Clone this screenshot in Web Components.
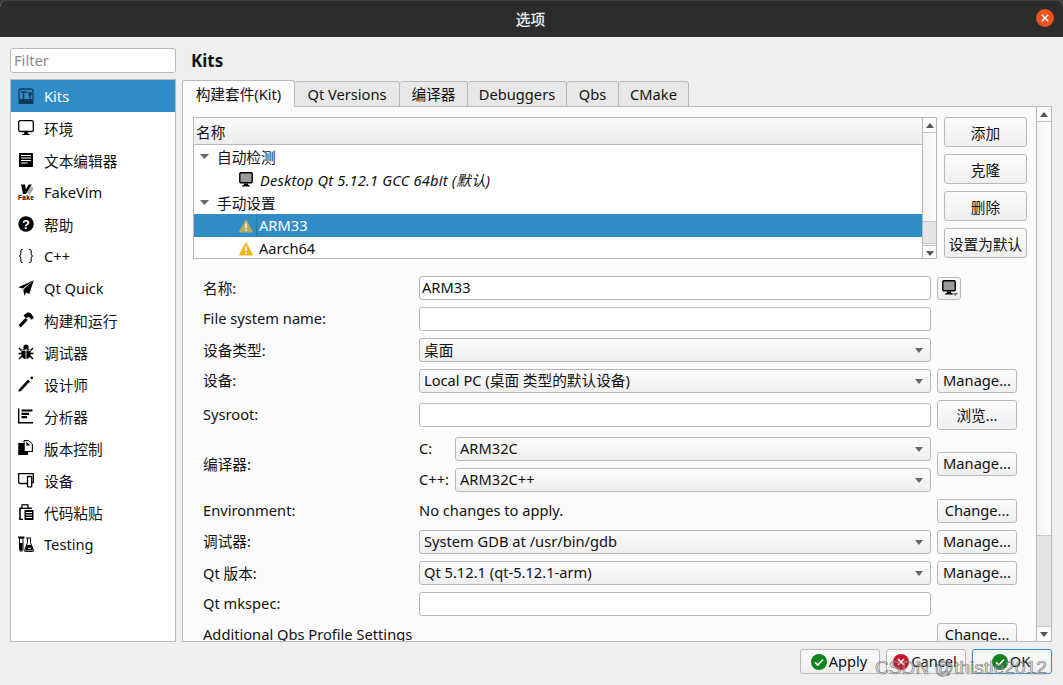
<!DOCTYPE html>
<html lang="zh"><head><meta charset="utf-8"><title>选项</title>
<style>
html,body{margin:0;padding:0;background:#3a3a3a}
body{width:1063px;height:685px;overflow:hidden;font:14.67px/18px "Noto Sans","Noto Sans CJK SC",sans-serif;color:#111}
</style></head><body>
<q-dialog>
  <q-titlebar slot="title">选项</q-titlebar>
  <q-sidebar slot="side">
    <q-side-item icon="kits" selected>Kits</q-side-item>
    <q-side-item icon="monitor" cjk>环境</q-side-item>
    <q-side-item icon="doc" cjk>文本编辑器</q-side-item>
    <q-side-item icon="fake">FakeVim</q-side-item>
    <q-side-item icon="help" cjk>帮助</q-side-item>
    <q-side-item icon="braces">C++</q-side-item>
    <q-side-item icon="plane">Qt Quick</q-side-item>
    <q-side-item icon="hammer" cjk>构建和运行</q-side-item>
    <q-side-item icon="bug" cjk>调试器</q-side-item>
    <q-side-item icon="pen" cjk>设计师</q-side-item>
    <q-side-item icon="bars" cjk>分析器</q-side-item>
    <q-side-item icon="vcs" cjk>版本控制</q-side-item>
    <q-side-item icon="device" cjk>设备</q-side-item>
    <q-side-item icon="paste" cjk>代码粘贴</q-side-item>
    <q-side-item icon="flask">Testing</q-side-item>
  </q-sidebar>
  <q-tabs slot="main">
    <q-tab slot="tabs" selected style="width:113px">构建套件(Kit)</q-tab>
    <q-tab slot="tabs" style="width:105px">Qt Versions</q-tab>
    <q-tab slot="tabs" style="width:68px">编译器</q-tab>
    <q-tab slot="tabs" style="width:99px">Debuggers</q-tab>
    <q-tab slot="tabs" style="width:52px">Qbs</q-tab>
    <q-tab slot="tabs" style="width:70px">CMake</q-tab>
    <q-kit-top>
      <q-tree slot="tree"></q-tree>
      <q-btn slot="act" tall drop>添加</q-btn>
      <q-btn slot="act" tall drop>克隆</q-btn>
      <q-btn slot="act" tall drop>删除</q-btn>
      <q-btn slot="act" tall drop>设置为默认</q-btn>
    </q-kit-top>
    <q-form>
      <span class="n">名称:</span><q-input value="ARM33"></q-input><q-icon-btn></q-icon-btn>
      <span>File system name:</span><q-input></q-input><i></i>
      <span class="n">设备类型:</span><q-combo cjk>桌面</q-combo><i></i>
      <span>设备:</span><q-combo>Local PC (桌面 类型的默认设备)</q-combo><q-btn lift>Manage...</q-btn>
      <span>Sysroot:</span><q-input></q-input><q-btn tall>浏览...</q-btn>
      <span>编译器:</span><q-compilers>
        <span>C:</span><q-combo>ARM32C</q-combo>
        <span>C++:</span><q-combo>ARM32C++</q-combo>
      </q-compilers><q-btn lift style="align-self:start;margin-top:15px">Manage...</q-btn>
      <span>Environment:</span><span>No changes to apply.</span><q-btn lift>Change...</q-btn>
      <span>调试器:</span><q-combo>System GDB at /usr/bin/gdb</q-combo><q-btn lift>Manage...</q-btn>
      <span class="n">Qt 版本:</span><q-combo>Qt 5.12.1 (qt-5.12.1-arm)</q-combo><q-btn lift>Manage...</q-btn>
      <span>Qt mkspec:</span><q-input></q-input><i></i>
      <span>Additional Qbs Profile Settings</span><i></i><q-btn lift>Change...</q-btn>
    </q-form>
  </q-tabs>
  <q-btn slot="foot" wide lift status="ok">Apply</q-btn>
  <q-btn slot="foot" wide lift status="no">Cancel</q-btn>
  <q-btn slot="foot" wide lift status="ok" focused>OK</q-btn>
  <q-watermark slot="over">CSDN @thistle2012</q-watermark>
</q-dialog>
<script>
const ICONS={
kits:'<g fill="none" stroke="#12395c" stroke-width="1.3"><path d="M1 11V3a2 2 0 0 1 2-2h10a2 2 0 0 1 2 2v8"/></g><rect x="0.5" y="11" width="15" height="5" fill="#12395c"/><path d="M3 4h6M5.5 4v7M11 4v2.500a1.200 1.200 0 0 0 2 0V4M12 6v5" fill="none" stroke="#12395c" stroke-width="1.4"/>',
monitor:'<rect x="0.7" y="0.7" width="14.6" height="10.8" rx="1.6" fill="#fff" stroke="#000" stroke-width="1.3"/><path d="M6.3 12h3.4v1.4l2.2.8v.8H4.100v-.8l2.200-.8z"/>',
doc:'<rect x="1" y="1" width="14" height="14"/><path d="M3 3.500h10M3 6h10M3 8.500h10M3 11h6.500" stroke="#fff" stroke-width="1.200"/>',
fake:'<path d="M3 .5h4l.8 5 3-5h3L8 10H5z"/><path d="M9 8l5-6 1.500 3-4 6z" fill="#aaa"/><text x="0" y="15.800" font-family="Liberation Sans" font-size="6.600" font-weight="700" textLength="16">Fake</text>',
help:'<circle cx="8" cy="8" r="7.700"/><text x="8" y="12.600" text-anchor="middle" font-family="Liberation Sans" font-weight="700" font-size="13" fill="#fff">?</text>',
braces:'<path d="M5 1.500H4.200Q2.800 1.500 2.800 3v3Q2.800 7.800 1.200 8q1.600.2 1.600 2v3q0 1.500 1.400 1.500H5M11 1.500h.8q1.400 0 1.400 1.500v3q0 1.800 1.600 2-1.600.2-1.600 2v3q0 1.500-1.400 1.500H11" fill="none" stroke="#000" stroke-width="1"/>',
plane:'<path d="M15.800 .2L.2 7.300l4.600 1.200zM15.800 .2L5.300 9.600l.9 6 2.100-3.200 3 1.600z"/>',
hammer:'<path d="M5.500 3.200L9.800 .3l3 1 3 4.300-2 2.200-3.200-3-1 .8-2 .3z"/><path d="M1.700 14.300L8.500 7" stroke="#000" stroke-width="3.200"/>',
bug:'<ellipse cx="8" cy="9.500" rx="4.800" ry="5.500"/><circle cx="8" cy="3.200" r="2.600"/><path d="M1 4l3 3M15 4l-3 3M.500 9.500h3M15.500 9.500h-3M1 15l3-3M15 15l-3-3" stroke="#000" stroke-width="1.500"/><path d="M8 5v10M3.500 6.300h9" stroke="#fff" stroke-width=".8"/>',
pen:'<path d="M1.800 14.300L11 4.500" stroke="#000" stroke-width="2.600"/><path d="M.3 15.800l.8-2.600 1.800 1.700z"/><circle cx="13.700" cy="1.900" r="1.300"/>',
bars:'<path d="M.7 .5v15M0 14.800h15" stroke="#000" stroke-width="1.400"/><path d="M3.500 2.500h11M3.500 5.800h7.500M3.500 9.200h5.500" stroke="#000" stroke-width="2.200"/>',
vcs:'<path d="M6 0h3v4h6v8h-5v3H.5V3H6z"/><path d="M6 .7h4.800L14.300 4v7.500H6z" fill="#fff" stroke="#000"/><path d="M8.300 1.500v4h4z" fill="#000"/><path d="M.5 3h6v12h-6z"/>',
device:'<path d="M.7 1.700h14.600v8.800h-4.500v1H2.200a1.500 1.500 0 0 1-1.500-1.500z" fill="#fff" stroke="#000" stroke-width="1.300"/><rect x="9.500" y="4.500" width="4.200" height="10.300" rx=".6" fill="#fff" stroke="#000" stroke-width="1.300"/>',
paste:'<path d="M1.700 3.500h3V1.800h5.500v1.700h3.500v1.500H2.800v9.800h2.200V16H1.200V4.200z"/><rect x="4" y=".8" width="6" height="3.500" fill="#fff" stroke="#000" stroke-width="1.200"/><rect x="6.500" y="6" width="9" height="10"/><path d="M8 8.500h6M8 11h6M8 13.500h6" stroke="#fff"/>',
flask:'<path d="M0 .5h6.500v1.800H0z"/><path d="M1.500 2.300h3.500v11.200a1.700 1.700 0 0 1-3.500 0z" fill="#fff" stroke="#000" stroke-width="1"/><path d="M2 7h2.500v6.500a1.200 1.200 0 0 1-2.500 0z"/><path d="M8 2h5M9.500 2v4.500l-3 8a.8.8 0 0 0 .7 1h7.600a.8.8 0 0 0 .7-1l-3-8V2" fill="#fff" stroke="#000" stroke-width="1"/><path d="M8.800 9h4.400l2 5.500H7z"/><path d="M10 12.300h3" stroke="#fff"/>'
};
const MON='<rect x="0.8" y="0.8" width="12.4" height="10" rx="1" fill="#9a9a9a" stroke="#000" stroke-width="1.400"/><path d="M5 11.500h4v1.300l2 .9v.8H3v-.8l2-.9z"/>';
const warn=(c,b)=>`<svg width="14" height="14" viewBox="0 0 14 14"><path d="M7 .8L13.600 13H.4z" fill="${c}" stroke="${c}" stroke-linejoin="round"/><path d="M7 4.500v4.500M7 10.200v1.500" stroke="${b}" stroke-width="1.700"/></svg>`;
const css=(s)=>`<style>${s}</style>`;
class Base extends HTMLElement{
  constructor(){super();this.attachShadow({mode:'open'}).innerHTML=this.constructor.html(this)}
}
const def=(n,html)=>customElements.define(n,class extends Base{static html(){return html}});

def('q-dialog',css(`
:host{display:grid;grid-template-rows:37px 1fr;width:1063px;height:685px;position:relative;background:#efefef;border-radius:7px 7px 0 0;overflow:hidden}
.body{display:grid;grid-template-columns:166px 870px;column-gap:6px;grid-template-rows:594px 1fr;padding:11px 11px 0 10px}
.foot{grid-column:1/3;display:flex;justify-content:flex-end;gap:6px;padding-top:7px}
.left{display:grid;grid-template-rows:25px 1fr;row-gap:6px}
.filter{background:#fff;border:1px solid #b9b9b9;border-radius:3px;color:#8a8a8a;padding:2px 3px;line-height:19px;font-size:14.67px}
.main{display:grid;grid-template-rows:32px 1fr}
h1{margin:0;font:700 17px/26px "Noto Sans","Noto Sans CJK SC",sans-serif;padding-left:9px;color:#111}
`)+`<slot name="title"></slot>
<div class="body">
  <div class="left"><div class="filter">Filter</div><slot name="side"></slot></div>
  <div class="main"><h1>Kits</h1><slot name="main"></slot></div>
  <div class="foot"><slot name="foot"></slot></div>
</div><slot name="over"></slot>`);

def('q-titlebar',css(`
:host{display:flex;align-items:center;justify-content:center;background:#2c2c2c;color:#f2f2f2;font-size:14.67px;position:relative;box-shadow:inset 0 1px #3d3d3d;padding-right:2px}
b{font-weight:500}
svg{position:absolute;right:9px;top:9px}
`)+`<b><slot></slot></b><svg width="18" height="18" viewBox="0 0 18 18"><circle cx="9" cy="9" r="9" fill="#e95420"/><path d="M5.800 5.800l6.400 6.400M12.200 5.800l-6.400 6.400" stroke="#fff" stroke-width="1.500"/></svg>`);

def('q-sidebar',css(`:host{display:block;background:#fff;border:1px solid #b9b9b9;overflow:hidden}`)+`<slot></slot>`);

customElements.define('q-icon',class extends Base{static html(e){const n=e.getAttribute('name');return css(':host{display:block;width:16px;height:16px}svg{display:block;overflow:visible}')+`<svg width="16" height="16" viewBox="0 0 16 16">${ICONS[n]||''}</svg>`}});

customElements.define('q-side-item',class extends Base{static html(e){return css(`
:host{display:flex;align-items:center;height:32px;padding-left:7px;gap:10px;color:#111;box-sizing:border-box}
:host([selected]){background:#308cc6;color:#fff}
:host([cjk]) span{padding-top:2px}
`)+`<q-icon name="${e.getAttribute('icon')}"></q-icon><span><slot></slot></span>`}});

def('q-tabs',css(`
:host{display:grid;grid-template-rows:27px 1fr;min-height:0}
.bar{display:flex;align-items:flex-start;position:relative;z-index:1}
.pane{margin-top:-1px;border:1px solid #b9b9b9;background:#fbfbfb;display:grid;grid-template-columns:1fr 15px;min-height:0;overflow:hidden}
.content{padding:10px 0 0 10px;min-width:0;overflow:hidden;display:flex;flex-direction:column}
`)+`<div class="bar"><slot name="tabs"></slot></div>
<div class="pane"><div class="content"><slot></slot></div><q-scrollbar style="--thumb-top:428px;--thumb-h:92px"></q-scrollbar></div>`);

def('q-tab',css(`
:host{display:flex;align-items:center;justify-content:center;box-sizing:border-box;height:26px;margin-top:1px;background:#e8e8e8;border:1px solid #b9b9b9;border-left:0;border-radius:3px 3px 0 0;flex:none}
:host([selected]){height:27px;margin-top:0;background:#fbfbfb;border-left:1px solid #b9b9b9;border-bottom:0}
`)+`<slot></slot>`);

def('q-scrollbar',css(`
:host{display:block;position:relative;background:linear-gradient(90deg,#f2f2f2,#fcfcfc);border-left:1px solid #b9b9b9;box-sizing:border-box}
.b{position:absolute;left:0;right:0;height:14px;display:flex;align-items:center;justify-content:center;background:#fbfbfb}
.up{top:0;border-bottom:1px solid #c4c4c4}.dn{bottom:0;border-top:1px solid #c4c4c4}
.t{position:absolute;left:0;right:0;top:var(--thumb-top);height:var(--thumb-h);background:#e4e4e4;border-top:1px solid #c8c8c8;border-bottom:1px solid #c8c8c8;box-sizing:border-box}
svg{display:block}
`)+`<div class="t"></div><div class="b up"><svg width="8" height="5"><path d="M4 0l4 5H0z" fill="#555"/></svg></div><div class="b dn"><svg width="8" height="5"><path d="M0 0h8L4 5z" fill="#555"/></svg></div>`);

def('q-kit-top',css(`
:host{display:grid;grid-template-columns:744px 83px;column-gap:7px;flex:none;height:142px;margin-bottom:17px}
.act{display:grid;grid-template-rows:repeat(4,30px);row-gap:7px}
`)+`<slot name="tree"></slot><div class="act"><slot name="act"></slot></div>`);

const arrow='<svg width="9" height="5"><path d="M0 0h9L4.500 5z" fill="#666"/></svg>';
def('q-tree',css(`
:host{display:grid;grid-template-columns:1fr 14px;border:1px solid #b9b9b9;background:#fff;box-sizing:border-box;overflow:hidden}
.list{display:flex;flex-direction:column;min-width:0}
.hd{height:27px;flex:none;box-sizing:border-box;padding:5px 0 0 2px;background:linear-gradient(#fafafa,#ececec);border-bottom:1px solid #b9b9b9}
.r{height:23px;flex:none;display:flex;align-items:center;box-sizing:border-box}
.a{width:23px;padding-left:6px;box-sizing:border-box;display:flex;flex:none}
.sel{background:#308cc6;color:#fff}
.ic{margin-left:45px;width:16px;height:16px;display:flex;align-items:center;flex:none}
.sel .ic{border-right:1px solid #2a78ab;height:23px;width:17px}
.sel .ic+span{margin-left:2px;padding-bottom:2px}
.w+span{margin-left:4px;padding-bottom:2px}
em{font-style:italic;letter-spacing:.18px}
`)+`<div class="list">
<div class="hd">名称</div>
<div class="r"><span class="a">${arrow}</span><span>自动检测</span></div>
<div class="r"><span class="ic"><svg width="14" height="16" viewBox="0 0 14 16">${MON}</svg></span><span style="margin-left:5px"><em>Desktop Qt 5.12.1 GCC 64bit (默认)</em></span></div>
<div class="r"><span class="a">${arrow}</span><span>手动设置</span></div>
<div class="r sel"><span class="ic">${warn('#b3ac62','#eef0d8')}</span><span>ARM33</span></div>
<div class="r"><span class="ic w">${warn('#f0b70f','#fff')}</span><span>Aarch64</span></div>
</div><q-scrollbar style="--thumb-top:103px;--thumb-h:23px"></q-scrollbar>`);

customElements.define('q-btn',class extends Base{static html(e){
 const st=e.getAttribute('status');
 const ic=st==='ok'?'<svg width="16" height="16" viewBox="0 0 16 16"><circle cx="8" cy="8" r="8" fill="#0e8420"/><path d="M4 8.300l2.800 2.700L12 5.500" fill="none" stroke="#fff" stroke-width="1.700"/></svg>':st==='no'?'<svg width="16" height="16" viewBox="0 0 16 16"><circle cx="8" cy="8" r="8" fill="#c7162b"/><path d="M5 5l6 6M11 5l-6 6" stroke="#fff" stroke-width="1.700"/></svg>':'';
 return css(`
:host{display:flex;align-items:center;justify-content:center;box-sizing:border-box;height:24px;width:80px;background:linear-gradient(#fbfbfb,#efefef);border:1px solid #b9b9b9;border-radius:3px;white-space:nowrap;color:#111}
:host([tall]){height:30px;width:auto;align-self:center}
svg{flex:none}
:host([wide]){height:25px;gap:2px;padding-right:2px}
:host([focused]){border-color:#308cc6}
:host([lift]) span{padding-bottom:2px}
:host([drop]) span{padding-top:2px}
`)+ic+`<span><slot></slot></span>`}});

customElements.define('q-input',class extends Base{static html(e){return css(`
:host{display:block;box-sizing:border-box;height:24px;background:#fff;border:1px solid #b9b9b9;border-radius:3px;padding:1px 2px 3px;line-height:18px;align-self:center}
`)+`<span>${e.getAttribute('value')||''}</span>`}});

def('q-combo',css(`
:host{display:flex;align-items:center;justify-content:space-between;box-sizing:border-box;height:24px;background:linear-gradient(#fbfbfb,#efefef);border:1px solid #b9b9b9;border-radius:3px;padding:0 7px 0 4px}
span{padding-bottom:2px}
:host([cjk]) span{padding-bottom:0}
svg{flex:none}
`)+`<span><slot></slot></span><svg width="8" height="5"><path d="M0 0h8L4 5z" fill="#666"/></svg>`);

def('q-icon-btn',css(`
:host{display:flex;align-items:center;justify-content:center;box-sizing:border-box;width:24px;height:23px;background:linear-gradient(#fbfbfb,#efefef);border:1px solid #b9b9b9;border-radius:3px;position:relative}
.d{position:absolute;right:2px;bottom:3px}
`)+`<svg width="14" height="16" viewBox="0 0 14 16">${MON}</svg><svg class="d" width="5" height="3"><path d="M0 0h5L2.500 3z" fill="#666"/></svg>`);

def('q-form',css(`
:host{display:grid;grid-template-columns:216px 512px 86px;grid-template-rows:24px 24px 24px 24px 30px 55px 24px 24px 24px 24px 24px;column-gap:0;row-gap:7px;padding-left:10px;align-items:center;justify-items:start}
::slotted(span){white-space:nowrap;padding-bottom:2px}
::slotted(span.n){padding-bottom:0}
::slotted(q-input),::slotted(q-combo),::slotted(q-compilers){width:512px}
::slotted(q-btn){margin-left:6px;width:80px}
::slotted(q-icon-btn){margin-left:6px}
`)+`<slot></slot>`);

def('q-compilers',css(`
:host{display:grid;grid-template-columns:36px 476px;grid-template-rows:24px 24px;row-gap:7px;align-items:center}
::slotted(span){padding-bottom:2px}
`)+`<slot></slot>`);

def('q-watermark',css(`
:host{position:absolute;left:875px;top:656px;font:19px/24px "Liberation Sans",sans-serif;letter-spacing:.1px;color:rgba(235,235,235,.4);-webkit-text-stroke:.7px rgba(95,95,95,.8);white-space:nowrap;pointer-events:none}
`)+`<slot></slot>`);
</script>
</body></html>
